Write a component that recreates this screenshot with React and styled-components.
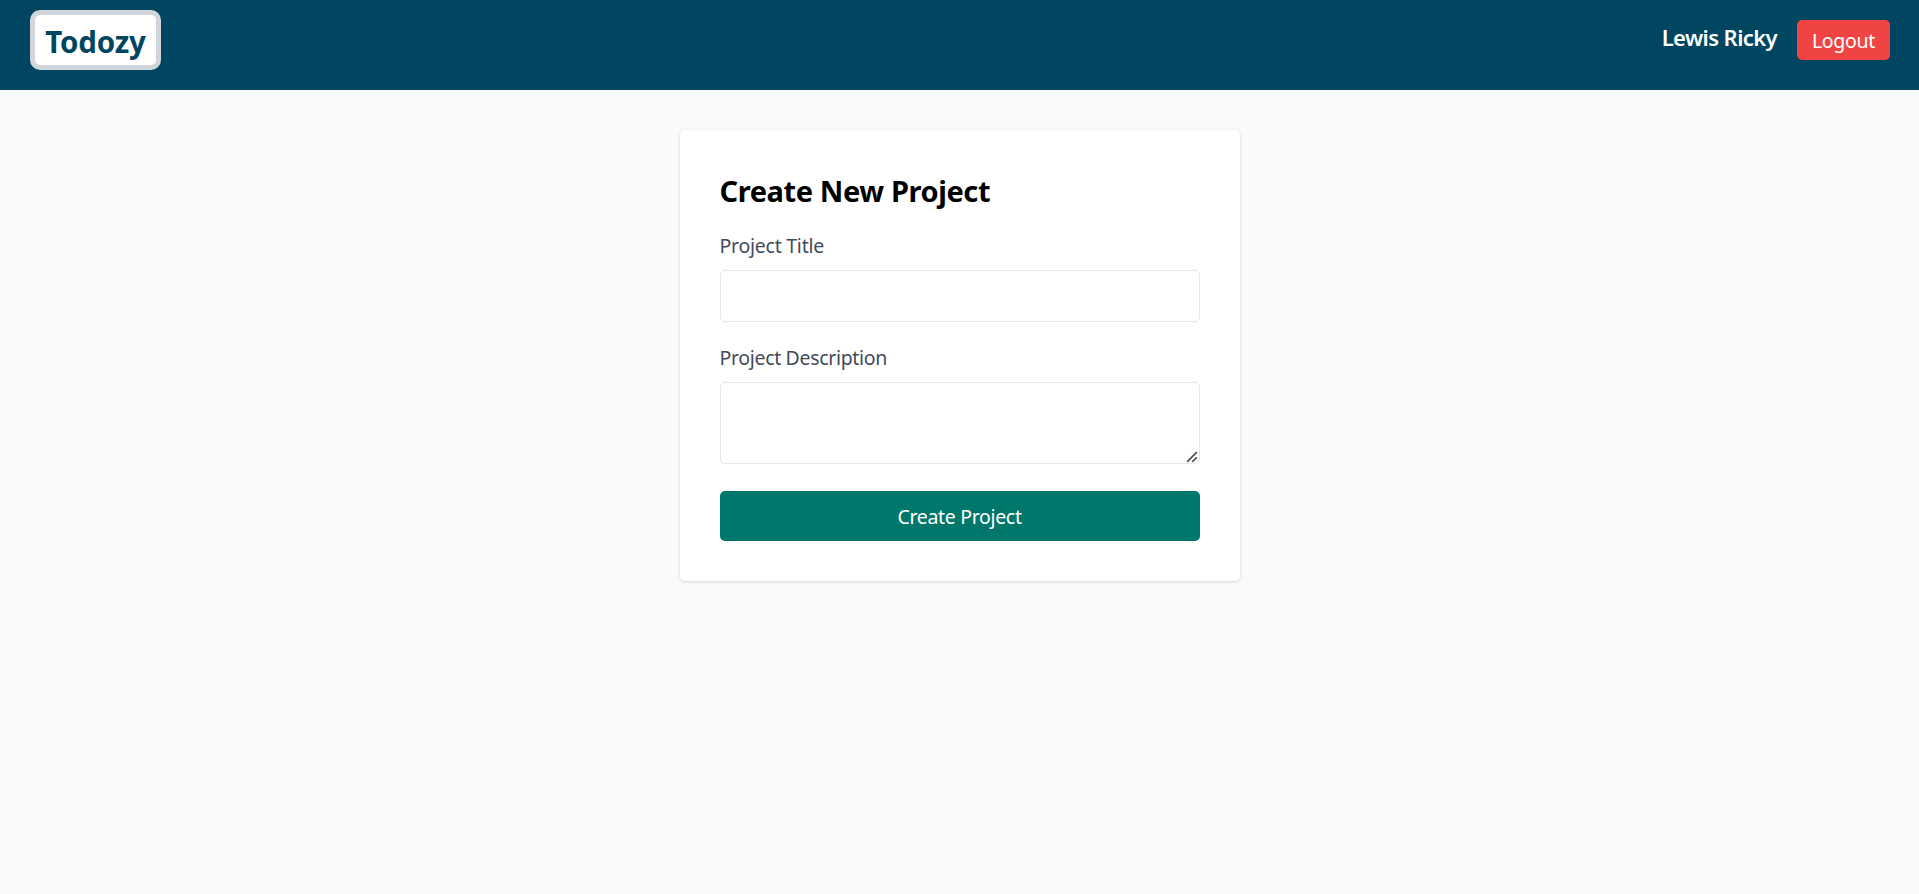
import React from "react";
import styled, { createGlobalStyle } from "styled-components";

const GlobalStyle = createGlobalStyle`
  *, *::before, *::after { box-sizing: border-box; }
  html { font-size: 20px; }
  body {
    margin: 0;
    background: #f9fafc;
    font-family: "Segoe UI", "Noto Sans", "Open Sans", sans-serif;
    line-height: 1.5;
  }
  button, input, textarea { font: inherit; }
`;

const Page = styled.div`
  min-height: 100vh;
`;

const Header = styled.header`
  display: flex;
  justify-content: space-between;
  align-items: flex-start;
  height: 90px;
  padding: 10px 29px 0 30px;
  background: #004661;
`;

const Logo = styled.a`
  display: flex;
  align-items: center;
  justify-content: center;
  width: 131px;
  height: 60px;
  padding-top: 3px;
  border: 5px solid #d1d5dc;
  border-radius: 10px;
  background: #fff;
  color: #004661;
  font-size: 29.5px;
  font-weight: 700;
  line-height: 40px;
  letter-spacing: -0.2px;
`;

const Account = styled.div`
  display: flex;
  align-items: flex-start;
  gap: 20px;
  padding-top: 10px;
`;

const UserName = styled.span`
  padding-top: 2px;
  color: #fff;
  font-size: 22px;
  font-weight: 600;
  line-height: 30px;
  letter-spacing: -0.6px;
`;

const LogoutButton = styled.button`
  width: 93px;
  height: 40px;
  padding: 2px 0 0;
  border: 0;
  border-radius: 5px;
  background: #f04444;
  color: #fff;
  font-size: 19.5px;
  line-height: 30px;
  letter-spacing: -0.3px;
`;

const Card = styled.main`
  width: 560px;
  margin: 40px auto 0;
  padding: 40px;
  border-radius: 5px;
  background: #fff;
  box-shadow: 0 1px 4px rgba(0, 0, 0, 0.1), 0 1px 3px -1px rgba(0, 0, 0, 0.1);
`;

const Title = styled.h2`
  margin: 0 0 19px;
  color: #000;
  font-size: 29px;
  font-weight: 700;
  line-height: 42px;
  letter-spacing: -0.4px;
`;

const Form = styled.form`
  display: flex;
  flex-direction: column;
`;

const Field = styled.div`
  display: flex;
  flex-direction: column;
  gap: 9px;
  margin-bottom: ${(p) => p.$gap}px;
`;

const Label = styled.label`
  color: #424b5a;
  font-size: 19.5px;
  line-height: 30px;
  letter-spacing: ${(p) => p.$tracking}px;
`;

const Input = styled.input`
  display: block;
  width: 100%;
  height: 52px;
  padding: 10px;
  border: 1px solid #e5e6e8;
  border-radius: 5px;
  background: #fff;
  outline: none;
`;

const TextAreaWrap = styled.div`
  position: relative;
`;

const TextArea = styled(Input)`
  height: 82px;
  resize: none;
`;

const ResizeGrip = styled.svg`
  position: absolute;
  right: 2px;
  bottom: 1px;
  width: 12px;
  height: 12px;
  pointer-events: none;
`;

const SubmitButton = styled.button`
  height: 50px;
  padding: 2px 0 0;
  border: 0;
  border-radius: 5px;
  background: #00776b;
  color: #fff;
  font-size: 19.5px;
  line-height: 30px;
  letter-spacing: -0.32px;
`;

export default function App() {
  return (
    <Page>
      <GlobalStyle />
      <Header>
        <Logo>Todozy</Logo>
        <Account>
          <UserName>Lewis Ricky</UserName>
          <LogoutButton type="button">Logout</LogoutButton>
        </Account>
      </Header>
      <Card>
        <Title>Create New Project</Title>
        <Form>
          <Field $gap={21}>
            <Label htmlFor="title" $tracking={-0.25}>Project Title</Label>
            <Input id="title" type="text" />
          </Field>
          <Field $gap={27}>
            <Label htmlFor="description" $tracking={-0.33}>Project Description</Label>
            <TextAreaWrap>
              <TextArea as="textarea" id="description" />
              <ResizeGrip viewBox="0 0 12 12" fill="none" stroke="#505050" strokeWidth="1.7">
                <path d="M1.2 10.8 L10.8 1.2 M6.2 10.8 L10.8 6.4" />
              </ResizeGrip>
            </TextAreaWrap>
          </Field>
          <SubmitButton type="button">Create Project</SubmitButton>
        </Form>
      </Card>
    </Page>
  );
}
